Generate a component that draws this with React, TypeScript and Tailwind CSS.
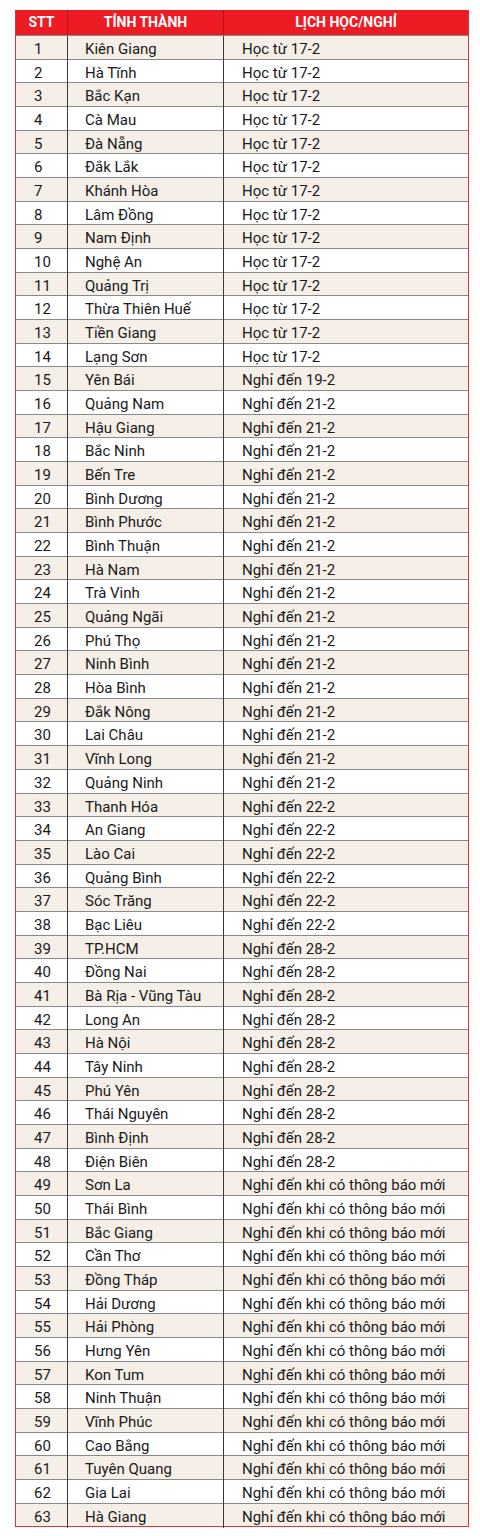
const rows: [string, string][] = [
  ["Kiên Giang", "Học từ 17-2"],
  ["Hà Tĩnh", "Học từ 17-2"],
  ["Bắc Kạn", "Học từ 17-2"],
  ["Cà Mau", "Học từ 17-2"],
  ["Đà Nẵng", "Học từ 17-2"],
  ["Đắk Lắk", "Học từ 17-2"],
  ["Khánh Hòa", "Học từ 17-2"],
  ["Lâm Đồng", "Học từ 17-2"],
  ["Nam Định", "Học từ 17-2"],
  ["Nghệ An", "Học từ 17-2"],
  ["Quảng Trị", "Học từ 17-2"],
  ["Thừa Thiên Huế", "Học từ 17-2"],
  ["Tiền Giang", "Học từ 17-2"],
  ["Lạng Sơn", "Học từ 17-2"],
  ["Yên Bái", "Nghỉ đến 19-2"],
  ["Quảng Nam", "Nghỉ đến 21-2"],
  ["Hậu Giang", "Nghỉ đến 21-2"],
  ["Bắc Ninh", "Nghỉ đến 21-2"],
  ["Bến Tre", "Nghỉ đến 21-2"],
  ["Bình Dương", "Nghỉ đến 21-2"],
  ["Bình Phước", "Nghỉ đến 21-2"],
  ["Bình Thuận", "Nghỉ đến 21-2"],
  ["Hà Nam", "Nghỉ đến 21-2"],
  ["Trà Vinh", "Nghỉ đến 21-2"],
  ["Quảng Ngãi", "Nghỉ đến 21-2"],
  ["Phú Thọ", "Nghỉ đến 21-2"],
  ["Ninh Bình", "Nghỉ đến 21-2"],
  ["Hòa Bình", "Nghỉ đến 21-2"],
  ["Đắk Nông", "Nghỉ đến 21-2"],
  ["Lai Châu", "Nghỉ đến 21-2"],
  ["Vĩnh Long", "Nghỉ đến 21-2"],
  ["Quảng Ninh", "Nghỉ đến 21-2"],
  ["Thanh Hóa", "Nghỉ đến 22-2"],
  ["An Giang", "Nghỉ đến 22-2"],
  ["Lào Cai", "Nghỉ đến 22-2"],
  ["Quảng Bình", "Nghỉ đến 22-2"],
  ["Sóc Trăng", "Nghỉ đến 22-2"],
  ["Bạc Liêu", "Nghỉ đến 22-2"],
  ["TP.HCM", "Nghỉ đến 28-2"],
  ["Đồng Nai", "Nghỉ đến 28-2"],
  ["Bà Rịa - Vũng Tàu", "Nghỉ đến 28-2"],
  ["Long An", "Nghỉ đến 28-2"],
  ["Hà Nội", "Nghỉ đến 28-2"],
  ["Tây Ninh", "Nghỉ đến 28-2"],
  ["Phú Yên", "Nghỉ đến 28-2"],
  ["Thái Nguyên", "Nghỉ đến 28-2"],
  ["Bình Định", "Nghỉ đến 28-2"],
  ["Điện Biên", "Nghỉ đến 28-2"],
  ["Sơn La", "Nghỉ đến khi có thông báo mới"],
  ["Thái Bình", "Nghỉ đến khi có thông báo mới"],
  ["Bắc Giang", "Nghỉ đến khi có thông báo mới"],
  ["Cần Thơ", "Nghỉ đến khi có thông báo mới"],
  ["Đồng Tháp", "Nghỉ đến khi có thông báo mới"],
  ["Hải Dương", "Nghỉ đến khi có thông báo mới"],
  ["Hải Phòng", "Nghỉ đến khi có thông báo mới"],
  ["Hưng Yên", "Nghỉ đến khi có thông báo mới"],
  ["Kon Tum", "Nghỉ đến khi có thông báo mới"],
  ["Ninh Thuận", "Nghỉ đến khi có thông báo mới"],
  ["Vĩnh Phúc", "Nghỉ đến khi có thông báo mới"],
  ["Cao Bằng", "Nghỉ đến khi có thông báo mới"],
  ["Tuyên Quang", "Nghỉ đến khi có thông báo mới"],
  ["Gia Lai", "Nghỉ đến khi có thông báo mới"],
  ["Hà Giang", "Nghỉ đến khi có thông báo mới"],
];

export default function App() {
  return (
    <div className="w-[480px] h-[1536px] bg-white pt-[10px] pl-[15px] font-['Roboto',sans-serif]">
      <div className="w-[454px] border-x-[1.5px] border-b-[1.5px] border-[#e0343c] text-[15px] text-[#1a1a1a]">
        {/* header */}
        <div className="grid grid-cols-[52px_156px_1fr] h-[25px] bg-[#ed1c24] text-white font-bold text-[14px]">
          <div className="flex items-center justify-center border-r border-[#b8141a]">STT</div>
          <div className="flex items-center justify-center border-r border-[#b8141a]">TỈNH THÀNH</div>
          <div className="flex items-center justify-center">LỊCH HỌC/NGHỈ</div>
        </div>
        {rows.map(([name, status], i) => (
          <div
            key={i}
            className={
              "grid grid-cols-[52px_156px_1fr] h-[23.68px] border-t border-[#8a8a8a] " +
              (i % 2 === 0 ? "bg-[#f5efe7]" : "bg-white")
            }
          >
            <div className="flex items-center pl-[18px] pt-[2px] border-r border-[#3a3a3a]">{i + 1}</div>
            <div className="flex items-center pl-[17px] pt-[2px] border-r border-[#3a3a3a]">{name}</div>
            <div className="flex items-center pl-[18px] pt-[2px]">{status}</div>
          </div>
        ))}
      </div>
    </div>
  );
}
